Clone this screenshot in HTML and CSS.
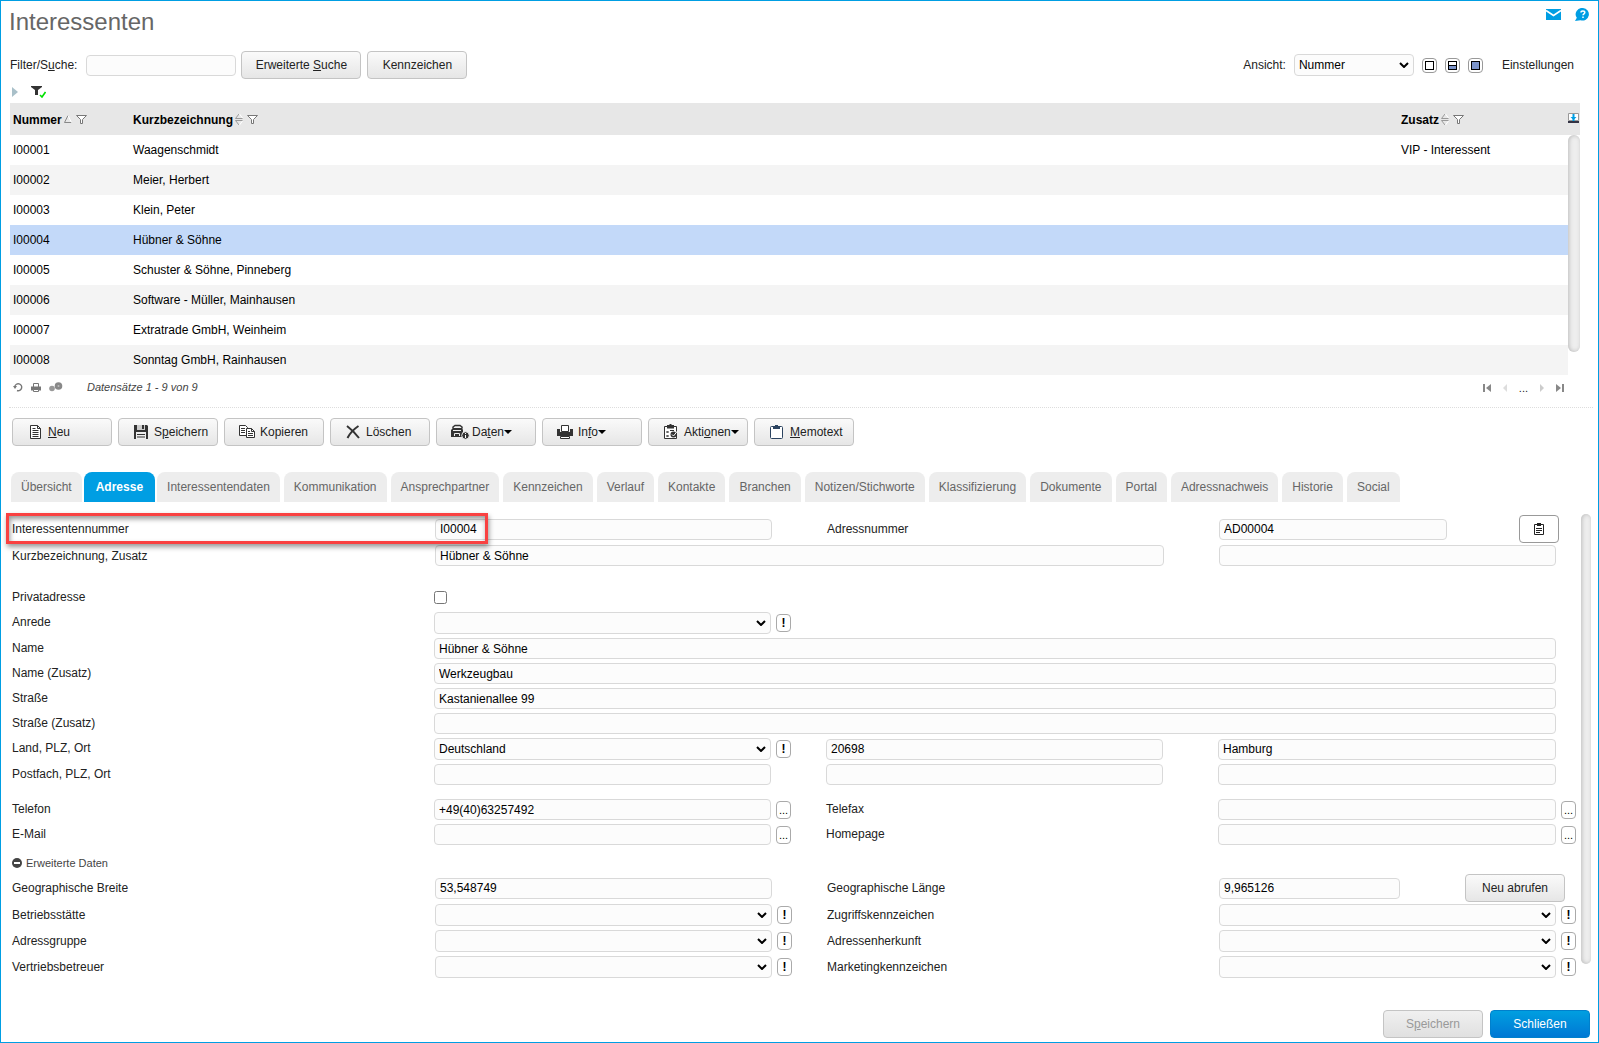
FILE: index.html
```html
<!DOCTYPE html>
<html lang="de">
<head>
  <meta charset="UTF-8" />
  <meta name="viewport" content="width=device-width, initial-scale=1.0" />
  <title>Interessenten</title>
  <link rel="stylesheet" href="styles.css">
</head>
<body>
  <header class="page-header">
    <h1>Interessenten</h1>
    <div class="header-icons">
      <a href="#mail" aria-label="Nachricht">
        <svg width="15" height="11" viewBox="0 0 15 11"><rect width="15" height="11" fill="#009ee3"/><path d="M0 1.5l7.5 5 7.5-5" fill="none" stroke="#fff" stroke-width="1.6"/></svg>
      </a>
      <a href="#hilfe" aria-label="Hilfe">
        <svg width="15" height="13" viewBox="0 0 15 13"><path d="M8 0a6.5 6.3 0 1 1-2.5 12.3L0 13l1.8-3.2A6.5 6.3 0 0 1 8 0z" fill="#009ee3"/><path d="M6 4.600c0-2.200 3.800-2.200 3.800 0 0 1.300-1.800 1.300-1.800 2.700M8 8.600v1.400" fill="none" stroke="#fff" stroke-width="1.5"/></svg>
      </a>
    </div>
  </header>

  <section class="filter-bar">
    <label for="suche">Filter/S<u>u</u>che:</label>
    <input type="text" id="suche" class="search">
    <button class="btn wide">Erweiterte <u>S</u>uche</button>
    <button class="btn">Kennzeichen</button>
    <div class="view-options">
      <label for="ansicht">Ansicht:</label>
      <select id="ansicht"><option>Nummer</option></select>
      <button class="layout-btn" aria-label="Nur Liste"><svg width="9" height="9"><rect x=".5" y=".5" width="8" height="8" fill="#fff" stroke="#000"/></svg></button>
      <button class="layout-btn" aria-label="Geteilt"><svg width="9" height="9"><rect x=".5" y=".5" width="8" height="8" fill="#fff" stroke="#000"/><path d="M1 5h7v3H1z" fill="#7b93c9"/><path d="M0 4.5h9" stroke="#000"/></svg></button>
      <button class="layout-btn" aria-label="Nur Formular"><svg width="9" height="9"><rect x=".5" y=".5" width="8" height="8" fill="#7b93c9" stroke="#000"/></svg></button>
      <a href="#einstellungen" class="settings">Einstellungen</a>
    </div>
  </section>

  <div class="filter-icons">
    <svg width="6" height="10"><path d="M0 0l6 5-6 5z" fill="#a9c0c9"/></svg>
    <svg width="15" height="12" viewBox="0 0 15 12"><path d="M0 0h11v1L7 4v5H4V4L0 1z" fill="#333"/><path d="M9 9l2 2 3.5-5" fill="none" stroke="#00e000" stroke-width="1.6"/></svg>
  </div>

  <table class="records">
    <thead>
      <tr>
        <th class="col-number">Nummer<svg width="8" height="8" viewBox="0 0 8 8"><path d="M7.5 7.5H.5L4 .5" fill="none" stroke="#888"/><path d="M4 .5l3.5 7" stroke="#fff"/></svg><svg class="funnel" width="11" height="9" viewBox="0 0 11 9"><path d="M.5.5h10l-4 4v4h-2v-4z" fill="#fff" stroke="#777"/></svg></th>
        <th>Kurzbezeichnung<svg width="8" height="11" viewBox="0 0 8 11"><path d="M4 0L.5 4.5h7M.5 6.5h7M.5 6.5L4 11" fill="none" stroke="#999"/><path d="M4.5 0l3 4M7.5 7l-3 4" stroke="#fff"/></svg><svg class="funnel" width="11" height="9" viewBox="0 0 11 9"><path d="M.5.5h10l-4 4v4h-2v-4z" fill="#fff" stroke="#777"/></svg></th>
        <th class="col-extra">Zusatz<svg width="8" height="11" viewBox="0 0 8 11"><path d="M4 0L.5 4.5h7M.5 6.5h7M.5 6.5L4 11" fill="none" stroke="#999"/><path d="M4.5 0l3 4M7.5 7l-3 4" stroke="#fff"/></svg><svg class="funnel" width="11" height="9" viewBox="0 0 11 9"><path d="M.5.5h10l-4 4v4h-2v-4z" fill="#fff" stroke="#777"/></svg></th>
        <th class="col-scroll"><svg width="11" height="10" viewBox="0 0 11 10"><path d="M.5.5h10v7H.5z" fill="#fff" stroke="#999"/><path d="M0 8h11v2H0z" fill="#334"/><path d="M5.5 1v7" stroke="#009ee3" stroke-width="2"/><path d="M2.5 4h6L5.5 7z" fill="#009ee3"/></svg></th>
      </tr>
    </thead>
    <tbody>
      <tr><td>I00001</td><td>Waagenschmidt</td><td>VIP - Interessent</td><td class="scroll-cell" rowspan="8"><div class="scroll-thumb list-thumb"></div></td></tr>
      <tr><td>I00002</td><td>Meier, Herbert</td><td></td></tr>
      <tr><td>I00003</td><td>Klein, Peter</td><td></td></tr>
      <tr class="selected"><td>I00004</td><td>Hübner &amp; Söhne</td><td></td></tr>
      <tr><td>I00005</td><td>Schuster &amp; Söhne, Pinneberg</td><td></td></tr>
      <tr><td>I00006</td><td>Software - Müller, Mainhausen</td><td></td></tr>
      <tr><td>I00007</td><td>Extratrade GmbH, Weinheim</td><td></td></tr>
      <tr><td>I00008</td><td>Sonntag GmbH, Rainhausen</td><td></td></tr>
    </tbody>
  </table>

  <div class="records-footer">
    <div class="footer-icons">
      <svg width="10" height="10" viewBox="0 0 10 10"><path d="M1.8 4.500A3.5 3.5 0 1 1 4 8.500" fill="none" stroke="#777" stroke-width="1.4"/><path d="M0 4h4L2 7z" fill="#777"/></svg>
      <svg width="10" height="9" viewBox="0 0 10 9"><path d="M2.5 4V.5h5V4" fill="none" stroke="#777"/><path d="M0 3.500h10v4H0z" fill="#777"/><path d="M2.5 6.500v2h5v-2z" fill="#fff" stroke="#777"/></svg>
      <svg width="14" height="10" viewBox="0 0 14 10"><circle cx="3" cy="6.500" r="2.800" fill="#999"/><circle cx="9.500" cy="4" r="3.800" fill="#888"/><circle cx="9.500" cy="4" r="1" fill="#bbb"/></svg>
    </div>
    <span class="record-count">Datensätze 1 - 9 von 9</span>
    <div class="pager">
      <svg width="8" height="8"><path d="M0 0h2v8H0zM8 0v8L3 4z" fill="#888"/></svg>
      <svg width="8" height="8"><path d="M6 0v8L2 4z" fill="#ddd"/></svg>
      <span>...</span>
      <svg width="8" height="8"><path d="M2 0v8l4-4z" fill="#ccc"/></svg>
      <svg width="8" height="8"><path d="M6 0h2v8H6zM0 0v8l5-4z" fill="#888"/></svg>
    </div>
  </div>

  <div class="toolbar">
    <button class="btn tool"><svg width="20" height="16" viewBox="0 0 20 16"><path d="M4.5 1.5h7l3 3v10h-10z" fill="#fff" stroke="#333"/><path d="M11.5 1.5v3h3M6.5 4.5h3M6.5 6.5h6M6.5 8.5h6M6.5 10.5h6M6.5 12.5h6" fill="none" stroke="#333"/></svg><span><u>N</u>eu</span></button>
    <button class="btn tool"><svg width="20" height="16" viewBox="0 0 20 16"><path d="M2 1h13l1 1v13H2z" fill="#333"/><path d="M5 1h8v5H5z" fill="#ccc"/><path d="M10 1h2v4h-2z" fill="#333"/><path d="M4 8h10v7H4z" fill="#eee"/><path d="M5 10.5h8M5 13h8" stroke="#333"/></svg><span>S<u>p</u>eichern</span></button>
    <button class="btn tool"><svg width="20" height="16" viewBox="0 0 20 16"><path d="M1.5 1.5h6l2 2v8h-8z" fill="#fff" stroke="#333"/><path d="M3 4.5h4M3 6.5h4M3 8.5h4" stroke="#333"/><path d="M8.5 4.5h5l3 3v6h-8z" fill="#fff" stroke="#333"/><path d="M13.5 4.5v3h3M10 7.5h2M10 9.5h5M10 11.5h5" fill="none" stroke="#333"/></svg><span>Kopieren</span></button>
    <button class="btn tool"><svg width="20" height="16" viewBox="0 0 20 16"><path d="M3 2c4 3 8 7 12 12M14.5 2C10 5 6 9 3.5 14" fill="none" stroke="#333" stroke-width="2"/></svg><span>Löschen</span></button>
    <button class="btn tool"><svg width="20" height="16" viewBox="0 0 20 16"><path d="M3 4.5V3l2-1.500h5L12 3v1.500" fill="none" stroke="#333" stroke-width="1.5"/><path d="M1 6l2-2h9l1 2v7H1z" fill="#333"/><path d="M3 6.500h8M4.5 12V9.500h5V12" fill="none" stroke="#eee"/><circle cx="15.5" cy="11.5" r="3.800" fill="#333" stroke="#eee"/><path d="M15.5 9v1M15.5 11v3" stroke="#fff"/></svg><span>Da<u>t</u>en</span><i class="caret"></i></button>
    <button class="btn tool"><svg width="20" height="16" viewBox="0 0 20 16"><path d="M1 5h3v3h10V5h3v7H1z" fill="#333"/><path d="M5.5 7.500v-6h7v6z" fill="#fff" stroke="#333"/><path d="M4.5 12.500h9v2h-9z" fill="#fff" stroke="#333"/></svg><span>In<u>f</u>o</span><i class="caret"></i></button>
    <button class="btn tool"><svg width="20" height="16" viewBox="0 0 20 16"><path d="M2.5 2.500h12v12h-12z" fill="#fff" stroke="#333"/><path d="M5 1h7v3.500H5zM7.5 0h2v2h-2z" fill="#333"/><path d="M4.5 7l2 2m0-2l-2 2M4.5 11l2 2m0-2l-2 2M8 6.500h4" stroke="#333"/><circle cx="11.5" cy="10.500" r="3" fill="#333"/><path d="M10 10.500l1.5 1.500 4-5" fill="none" stroke="#fff"/></svg><span>Akti<u>o</u>nen</span><i class="caret"></i></button>
    <button class="btn tool"><svg width="20" height="16" viewBox="0 0 20 16"><rect x="2.5" y="2.500" width="12" height="12" rx="1" fill="#fff" stroke="#2b4360"/><path d="M5 2h2V1h3v1h2v3H5z" fill="#2b4360"/></svg><span><u>M</u>emotext</span></button>
  </div>

  <nav class="tabs">
    <a href="#uebersicht">Übersicht</a>
    <a href="#adresse" class="active">Adresse</a>
    <a href="#interessentendaten">Interessentendaten</a>
    <a href="#kommunikation">Kommunikation</a>
    <a href="#ansprechpartner">Ansprechpartner</a>
    <a href="#kennzeichen">Kennzeichen</a>
    <a href="#verlauf">Verlauf</a>
    <a href="#kontakte">Kontakte</a>
    <a href="#branchen">Branchen</a>
    <a href="#notizen">Notizen/Stichworte</a>
    <a href="#klassifizierung">Klassifizierung</a>
    <a href="#dokumente">Dokumente</a>
    <a href="#portal">Portal</a>
    <a href="#adressnachweis">Adressnachweis</a>
    <a href="#historie">Historie</a>
    <a href="#social">Social</a>
  </nav>

  <main class="detail">
    <form class="detail-form">
      <div class="highlight"></div>

      <div class="form-grid">
        <label for="nummer">Interessentennummer</label>
        <div class="field"><input type="text" id="nummer" value="I00004"></div>
        <label for="adressnummer">Adressnummer</label>
        <div class="field short">
          <input type="text" id="adressnummer" value="AD00004">
          <button type="button" class="clip-btn" aria-label="Zwischenablage"><svg width="10" height="12" viewBox="0 0 10 12"><path d="M.5 1.500h9v10h-9z" fill="#fff" stroke="#222"/><path d="M3 0h4v3H3zM2 5h6v1H2zM2 7h6v1H2zM2 9h4v1H2z" fill="#222"/></svg></button>
        </div>

        <label for="kurz">Kurzbezeichnung, Zusatz</label>
        <div class="field span-2"><input type="text" id="kurz" value="Hübner &amp; Söhne"></div>
        <div class="field"><input type="text" aria-label="Zusatz"></div>
      </div>

      <div class="form-grid address">
        <label for="privat">Privatadresse</label>
        <div class="field span-3"><input type="checkbox" id="privat"></div>

        <label for="anrede">Anrede</label>
        <div class="field"><select id="anrede"><option></option></select><button type="button" class="mini">!</button></div>
        <span class="span-2"></span>

        <label for="name">Name</label>
        <div class="field span-3"><input type="text" id="name" value="Hübner &amp; Söhne"></div>

        <label for="name2">Name (Zusatz)</label>
        <div class="field span-3"><input type="text" id="name2" value="Werkzeugbau"></div>

        <label for="strasse">Straße</label>
        <div class="field span-3"><input type="text" id="strasse" value="Kastanienallee 99"></div>

        <label for="strasse2">Straße (Zusatz)</label>
        <div class="field span-3"><input type="text" id="strasse2"></div>

        <label for="land">Land, PLZ, Ort</label>
        <div class="field"><select id="land"><option>Deutschland</option></select><button type="button" class="mini">!</button></div>
        <div class="field"><input type="text" aria-label="PLZ" value="20698"></div>
        <div class="field"><input type="text" aria-label="Ort" value="Hamburg"></div>

        <label for="postfach">Postfach, PLZ, Ort</label>
        <div class="field"><input type="text" id="postfach"></div>
        <div class="field"><input type="text" aria-label="Postfach PLZ"></div>
        <div class="field"><input type="text" aria-label="Postfach Ort"></div>
      </div>

      <div class="form-grid contact">
        <label for="telefon">Telefon</label>
        <div class="field"><input type="text" id="telefon" value="+49(40)63257492"><button type="button" class="mini dots">...</button></div>
        <label for="telefax">Telefax</label>
        <div class="field"><input type="text" id="telefax"><button type="button" class="mini dots">...</button></div>

        <label for="email">E-Mail</label>
        <div class="field"><input type="text" id="email"><button type="button" class="mini dots">...</button></div>
        <label for="homepage">Homepage</label>
        <div class="field"><input type="text" id="homepage"><button type="button" class="mini dots">...</button></div>
      </div>

      <button type="button" class="toggle"><svg width="10" height="10"><circle cx="5" cy="5" r="5" fill="#444"/><path d="M2 5h6" stroke="#fff" stroke-width="2"/></svg><span>Erweiterte Daten</span></button>

      <div class="form-grid">
        <label for="breite">Geographische Breite</label>
        <div class="field"><input type="text" id="breite" value="53,548749"></div>
        <label for="laenge">Geographische Länge</label>
        <div class="field geo">
          <input type="text" id="laenge" value="9,965126">
          <button type="button" class="btn">Neu abrufen</button>
        </div>

        <label for="betrieb">Betriebsstätte</label>
        <div class="field"><select id="betrieb"><option></option></select><button type="button" class="mini">!</button></div>
        <label for="zugriff">Zugriffskennzeichen</label>
        <div class="field"><select id="zugriff"><option></option></select><button type="button" class="mini">!</button></div>

        <label for="gruppe">Adressgruppe</label>
        <div class="field"><select id="gruppe"><option></option></select><button type="button" class="mini">!</button></div>
        <label for="herkunft">Adressenherkunft</label>
        <div class="field"><select id="herkunft"><option></option></select><button type="button" class="mini">!</button></div>

        <label for="betreuer">Vertriebsbetreuer</label>
        <div class="field"><select id="betreuer"><option></option></select><button type="button" class="mini">!</button></div>
        <label for="marketing">Marketingkennzeichen</label>
        <div class="field"><select id="marketing"><option></option></select><button type="button" class="mini">!</button></div>
      </div>
    </form>
    <div class="scroll-thumb form-thumb"></div>
  </main>

  <footer class="page-footer">
    <button class="btn" disabled>S<u>p</u>eichern</button>
    <button class="btn primary">Schließen</button>
  </footer>
</body>
</html>
```
FILE: styles.css
```css
* {
  box-sizing: border-box;
}
body {
  display: flex;
  flex-direction: column;
  min-height: 100vh;
  margin: 0;
  border: 1px solid #009ee3;
  background: #fff;
  color: #222;
  font-family: "Liberation Sans", Arial, sans-serif;
  font-size: 12px;
  line-height: 16px;
}
svg {
  display: block;
  flex: none;
}
a {
  color: inherit;
  text-decoration: none;
}

/* header */
.page-header {
  display: flex;
  justify-content: space-between;
  padding: 7px 8px 0;
  margin-bottom: 15px;
}
h1 {
  margin: 0;
  font-size: 24px;
  line-height: 28px;
  font-weight: normal;
  color: #666;
}
.header-icons {
  display: flex;
  gap: 14px;
  height: 12px;
  align-items: center;
}

/* controls */
input[type="text"],
select {
  height: 21px;
  min-width: 0;
  margin: 0;
  padding: 0 4px;
  border: 1px solid #d9d9d9;
  border-radius: 4px;
  background: #fcfcfc;
  color: #000;
  font: inherit;
}
select {
  height: 22px;
  padding: 0 0 0 4px;
  appearance: none;
  background: #fcfcfc url("data:image/svg+xml,%3Csvg xmlns='http://www.w3.org/2000/svg' width='10' height='6'%3E%3Cpath d='M1 1l4 4 4-4' fill='none' stroke='%23000' stroke-width='2'/%3E%3C/svg%3E") no-repeat right 4px center;
}
.btn {
  flex: none;
  width: 100px;
  height: 28px;
  padding: 0;
  border: 1px solid #c4c4c4;
  border-radius: 4px;
  background: linear-gradient(#fafafa, #e6e6e6);
  color: #222;
  font: inherit;
  cursor: pointer;
}
.btn.wide {
  width: 120px;
}
.btn:disabled {
  background: linear-gradient(#f0f0f0, #e0e0e0);
  color: #999;
}
.btn.primary {
  border-color: #0080cc;
  background: linear-gradient(#009fe0, #0078d4);
  color: #fff;
}

/* filter bar */
.filter-bar {
  display: flex;
  align-items: center;
  gap: 6px;
  padding: 0 24px 0 9px;
}
.filter-bar .search {
  width: 150px;
  margin-left: 3px;
  margin-right: -1px;
}
.view-options {
  display: flex;
  align-items: center;
  gap: 8px;
  margin-left: auto;
}
.view-options select {
  width: 120px;
}
.layout-btn {
  display: flex;
  align-items: center;
  justify-content: center;
  width: 15px;
  height: 15px;
  padding: 0;
  border: 1px solid #999;
  border-radius: 4px;
  background: #fff;
}
.settings {
  margin-left: 11px;
}
.filter-icons {
  display: flex;
  align-items: center;
  gap: 13px;
  height: 24px;
  padding: 2px 11px 0;
}

/* record list */
.records {
  width: calc(100% - 27px);
  margin-left: 9px;
  border-collapse: collapse;
  table-layout: fixed;
  color: #000;
}
.records th {
  height: 32px;
  padding: 2px 3px 0;
  background: #e7e7e7;
  text-align: left;
}
.records th svg {
  display: inline-block;
  vertical-align: middle;
  margin: -3px 0 0 2px;
}
.records th .funnel {
  margin-left: 4px;
}
.records .col-number {
  width: 120px;
}
.records .col-extra {
  width: 170px;
}
.records .col-scroll {
  width: 12px;
  padding: 0;
}
.records .col-scroll svg {
  margin-left: 0;
}
.records td {
  height: 30px;
  padding: 0 3px;
}
.records tbody tr:nth-child(even) td {
  background: #f4f4f4;
}
.records tbody tr.selected td {
  background: #c3d9f9;
}
.records .scroll-cell {
  padding: 0;
  vertical-align: top;
}
.scroll-thumb {
  border-radius: 6px;
  background: #eee;
  box-shadow: inset 1px 0 4px #bbb;
}
.list-thumb {
  height: 217px;
}

.records-footer {
  display: flex;
  align-items: center;
  height: 33px;
  margin: 0 5px 0 8px;
  padding: 0 29px 8px 4px;
  border-bottom: 1px dotted #ddd;
}
.footer-icons {
  display: flex;
  align-items: center;
  gap: 8px;
}
.record-count {
  margin-left: 24px;
  font-size: 11px;
  font-style: italic;
  color: #444;
}
.pager {
  display: flex;
  align-items: center;
  gap: 10px;
  margin-left: auto;
  padding-top: 2px;
}
.pager span {
  font-size: 11px;
}

/* toolbar */
.toolbar {
  display: flex;
  gap: 6px;
  padding: 10px 11px 0;
}
.btn.tool {
  display: flex;
  align-items: center;
  padding-left: 13px;
}
.tool span {
  margin-left: 2px;
}
.caret {
  border: 4px solid transparent;
  border-top-color: #000;
  border-bottom: 0;
}

/* tabs */
.tabs {
  display: flex;
  gap: 4px;
  padding: 26px 10px 0;
}
.tabs a {
  padding: 7px 10px;
  border-radius: 8px 8px 0 0;
  background: #ededed;
  color: #666;
  white-space: nowrap;
}
.tabs .active {
  margin: 0 -2px;
  padding: 7px 12px;
  background: #009ee3;
  color: #fff;
  font-weight: bold;
}

/* address form */
.detail {
  display: flex;
  gap: 5px;
  padding: 12px 7px 0 11px;
}
.detail-form {
  position: relative;
  flex: 1;
  padding-top: 3px;
}
.form-thumb {
  width: 10px;
  height: 450px;
}
.form-grid {
  display: grid;
  grid-template-columns: 388fr 357fr 357fr 357fr;
  column-gap: 35px;
  row-gap: 4px;
  align-items: center;
}
.form-grid.address,
.form-grid.contact {
  grid-template-columns: 387fr 357fr 357fr 358fr;
}
.address label,
.contact label {
  padding-bottom: 2px;
}
.form-grid.address {
  margin-top: 21px;
}
.form-grid.contact {
  margin-top: 14px;
}
.span-2 {
  grid-column: span 2;
}
.span-3 {
  grid-column: span 3;
}
/* 20px on the right stay free for the small button */
.field {
  display: flex;
  align-items: center;
  min-width: 0;
  min-height: 21px;
  padding-right: 20px;
}
.field input[type="text"],
.field select {
  flex: 1;
}
.field input[type="checkbox"] {
  margin: 0;
}
.mini {
  flex: none;
  width: 15px;
  height: 18px;
  margin: 0 -20px 0 5px;
  padding: 0;
  border: 1px solid #aaa;
  border-radius: 4px;
  background: #fff;
  color: #000;
  font: bold 12px/16px "Liberation Sans", Arial, sans-serif;
}
.mini.dots {
  font-size: 11px;
  font-weight: normal;
}
.field.short,
.field.geo {
  justify-content: space-between;
  padding-right: 17px;
}
.field.short input[type="text"] {
  flex: 0 1 228px;
}
.field.geo input[type="text"] {
  flex: 0 1 181px;
}
.field.geo {
  padding-right: 11px;
}
.field .clip-btn {
  display: flex;
  flex: none;
  align-items: center;
  justify-content: center;
  width: 40px;
  height: 28px;
  margin: -2px 0;
  padding: 0;
  border: 1px solid #999;
  border-radius: 4px;
  background: #fff;
}
.field .btn {
  margin: -2px 0;
}
.toggle {
  display: flex;
  align-items: center;
  gap: 4px;
  height: 16px;
  margin: 10px 0 5px;
  padding: 0;
  border: 0;
  background: none;
  color: #444;
  font: 11px/16px "Liberation Sans", Arial, sans-serif;
}
.highlight {
  position: absolute;
  top: -1px;
  left: -6px;
  width: calc(27% + 60px);
  height: 31px;
  border: 3px solid #f94141;
  box-shadow: 1px 3px 5px rgba(0, 0, 0, 0.4), inset 1px 3px 5px rgba(0, 0, 0, 0.4);
  pointer-events: none;
}

.page-footer {
  display: flex;
  justify-content: flex-end;
  gap: 7px;
  margin-top: auto;
  padding: 24px 8px 4px;
}
```
